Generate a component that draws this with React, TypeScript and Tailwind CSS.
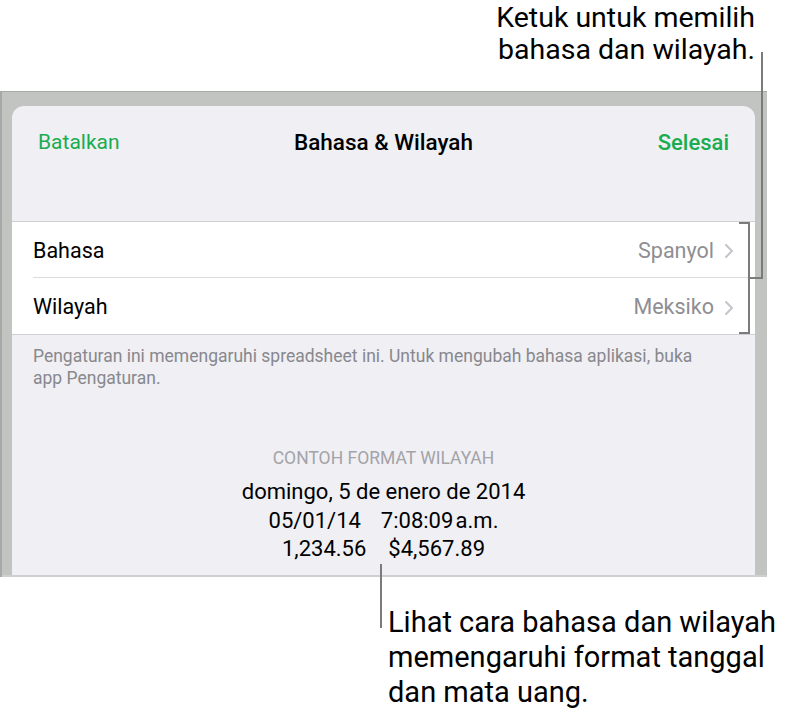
import { FunctionComponent } from "react";

const Chevron: FunctionComponent = () => (
  <svg width="10" height="16" viewBox="0 0 10 16" fill="none" className="ml-[10px]">
    <path d="M2 2l6 6-6 6" stroke="#c4c4c9" strokeWidth="2" strokeLinecap="round" strokeLinejoin="round" />
  </svg>
);

const SettingRow: FunctionComponent<{ label: string; value: string; last?: boolean }> = ({ label, value, last }) => {
  return (
    <div className="pl-[21px]">
      <div className={`flex h-[56px] items-center pr-[21px] pt-[3px] ${last ? "" : "border-b border-[#dcdce0]"}`}>
        <span className="text-[21.5px] text-black">{label}</span>
        <span className="ml-auto text-[21.5px] text-[#8e8e93]">{value}</span>
        <Chevron />
      </div>
    </div>
  );
};

const App: FunctionComponent = () => {
  return (
    <div className="relative h-[716px] w-[788px] overflow-hidden bg-white font-['Roboto',sans-serif]">
      {/* callout top */}
      <div className="h-[91px] pr-[33px] pt-[2px] text-right text-[28.5px] leading-[32px] text-black">
        <div>Ketuk untuk memilih</div>
        <div>bahasa dan wilayah.</div>
      </div>

      {/* ipad frame */}
      <div className="w-[767px] border-l-2 border-t border-[#a7a9a6] bg-[#c2c4c1] pl-[10px] pr-[12px] pt-[14px]">
        <div className="h-[469px] rounded-t-[12px] bg-[#efeff4]">
          <div className="grid h-[70px] grid-cols-[1fr_auto_1fr] items-center px-[26px] pt-[3px]">
            <span className="text-[21px] text-[#1aad4f]">Batalkan</span>
            <span className="text-[22.5px] font-medium text-black">Bahasa &amp; Wilayah</span>
            <span className="text-right text-[22px] font-medium text-[#1aad4f]">Selesai</span>
          </div>

          <div className="mt-[45px] border-y border-[#d0d0d4] bg-white">
            <SettingRow label="Bahasa" value="Spanyol" />
            <SettingRow label="Wilayah" value="Meksiko" last />
          </div>

          <p className="mt-[10px] pl-[21px] pr-[40px] text-[17.5px] leading-[22px] text-[#88888d]">
            Pengaturan ini memengaruhi spreadsheet ini. Untuk mengubah bahasa aplikasi, buka app Pengaturan.
          </p>

          <div className="mt-[59px] flex flex-col items-center">
            <div className="text-[17.5px] leading-[20px] uppercase text-[#a3a3a8]">Contoh Format Wilayah</div>
            <div className="mt-[10px] flex flex-col items-center text-[22px] leading-[28.5px] text-black">
              <div>domingo, 5 de enero de 2014</div>
              <div className="flex gap-[20px]">
                <span>05/01/14</span>
                <span>7:08:09{"\u200A"}a.m.</span>
              </div>
              <div className="flex gap-[22px]">
                <span>1,234.56</span>
                <span>$4,567.89</span>
              </div>
            </div>
          </div>
        </div>
        <div className="-ml-[10px] -mr-[12px] h-[2px] bg-[#cfcfcf]" />
      </div>

      {/* bottom callout */}
      <div className="pl-[388px] pt-[28px] text-[29px] leading-[35px] text-black">
        <div>Lihat cara bahasa dan wilayah</div>
        <div>memengaruhi format tanggal</div>
        <div>dan mata uang.</div>
      </div>

      {/* leader lines */}
      <div className="absolute left-[761px] top-[52px] h-[227px] w-[2px] bg-[#7b7b7b]" />
      <div className="absolute left-[748px] top-[277px] h-[2px] w-[15px] bg-[#7b7b7b]" />
      <div className="absolute left-[748px] top-[222px] h-[112px] w-[2px] bg-[#7b7b7b]" />
      <div className="absolute left-[739px] top-[222px] h-[2px] w-[11px] bg-[#7b7b7b]" />
      <div className="absolute left-[739px] top-[332px] h-[2px] w-[11px] bg-[#7b7b7b]" />
      <div className="absolute left-[380px] top-[564px] h-[64px] w-[2px] bg-[#7b7b7b]" />
    </div>
  );
};

export default App;
